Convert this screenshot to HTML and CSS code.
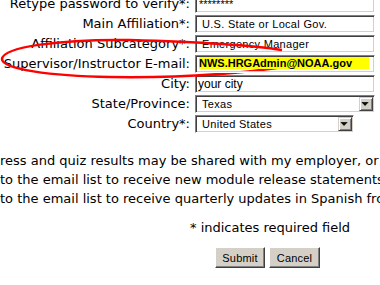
FILE: index.html
```html
<!DOCTYPE html>
<html lang="en">
<head>
    <meta charset="UTF-8">
    <title>Registration</title>
    <link rel="stylesheet" href="styles.css">
</head>
<body>
<div class="page">
    <form class="signup">
        <div class="fields">
            <label class="lbl">Retype password to verify*:</label>
            <input class="box pw" type="text" value="********">

            <label class="lbl">Main Affiliation*:</label>
            <input class="box" type="text" value="U.S. State or Local Gov.">

            <label class="lbl">Affiliation Subcategory*:</label>
            <input class="box" type="text" value="Emergency Manager">

            <label class="lbl">Supervisor/Instructor E-mail:</label>
            <input class="box mail" type="text" value="NWS.HRGAdmin@NOAA.gov">

            <label class="lbl">City:</label>
            <input class="box city" type="text" value="your city">

            <label class="lbl">State/Province:</label>
            <div class="combo">
                <select><option>Texas</option></select>
                <span class="drop"><svg width="14" height="14" viewBox="0 0 14 14"><rect x="3" y="5" width="7" height="1"/><rect x="4" y="6" width="5" height="1"/><rect x="5" y="7" width="3" height="1"/><rect x="6" y="8" width="1" height="1"/></svg></span>
            </div>

            <label class="lbl">Country*:</label>
            <div class="combo short">
                <select><option>United States</option></select>
                <span class="drop"><svg width="14" height="14" viewBox="0 0 14 14"><rect x="3" y="5" width="7" height="1"/><rect x="4" y="6" width="5" height="1"/><rect x="5" y="7" width="3" height="1"/><rect x="6" y="8" width="1" height="1"/></svg></span>
            </div>
        </div>

        <div class="opts">
            <p>ress and quiz results may be shared with my employer, or instructor</p>
            <p>to the email list to receive new module release statements</p>
            <p>to the email list to receive quarterly updates in Spanish from</p>
        </div>

        <p class="req">* indicates required field</p>

        <div class="actions">
            <button type="button" class="btn">Submit</button>
            <button type="button" class="btn">Cancel</button>
        </div>
    </form>

    <!-- red marker drawn round the e-mail row -->
    <svg class="marker" width="380" height="285" viewBox="0 0 380 285">
        <path d="M282 55 C250 50, 200 47, 130 45 C60 44, 3 52, 2 64 C2 74, 50 81, 110 82 C180 83, 240 79, 290 71"
              fill="none" stroke="#f00" stroke-width="2.5"/>
    </svg>
</div>
</body>
</html>
```

FILE: styles.css
```css
html, body {
    margin: 0;
    background: #fff;
}
body {
    width: 380px;
    height: 285px;
    overflow: hidden;
    color: #000;
    font-family: "DejaVu Sans", Verdana, sans-serif;
    font-size: 13px;
}
.page {
    position: relative;
    width: 380px;
    height: 285px;
}
.signup {
    margin: 0;
}

/* label / field table */
.fields {
    display: grid;
    grid-template-columns: 190px 180px;
    grid-auto-rows: 18px;
    column-gap: 5px;
    row-gap: 2px;
    margin-top: -5px;
}
.lbl {
    display: flex;
    justify-content: flex-end;
    align-items: center;
    white-space: nowrap;
    line-height: 18px;
}
.box {
    box-sizing: border-box;
    width: 180px;
    height: 18px;
    margin: 0;
    padding: 0 2px 0 6px;
    font-family: "Liberation Sans", Arial, sans-serif;
    font-size: 11px;
    letter-spacing: 0.3px;
    color: #000;
    background: #fff;
    border: 1px solid;
    border-color: #808080 #fff #fff #808080;
    box-shadow: inset 1px 1px #404040, inset -1px -1px #d4d0c8;
    outline: none;
}
.pw {
    padding-left: 3px;
    letter-spacing: 0;
}
.mail {
    position: relative;
    z-index: 2;
    font-weight: bold;
    letter-spacing: 0;
    padding: 1px 5px 3px 3px;
    background: #ff0 content-box;
}
.city {
    padding-left: 2px;
    font-size: 12px;
    letter-spacing: 0;
}

/* fake windows combo box */
.combo {
    box-sizing: border-box;
    display: flex;
    width: 180px;
    height: 18px;
    padding: 2px;
    background: #fff;
    border: 1px solid;
    border-color: #808080 #fff #fff #808080;
    box-shadow: inset 1px 1px #404040, inset -1px -1px #d4d0c8;
}
.combo.short {
    width: 159px;
}
.combo select {
    flex: 1;
    min-width: 0;
    margin: 0;
    padding: 0 0 0 4px;
    border: 0;
    background: transparent;
    font-family: "Liberation Sans", Arial, sans-serif;
    font-size: 11px;
    letter-spacing: 0.3px;
    color: #000;
    -webkit-appearance: none;
    appearance: none;
    outline: none;
}
.drop {
    box-sizing: border-box;
    display: flex;
    width: 14px;
    height: 14px;
    margin: -1px -1px 0 0;
    background: #d4d0c8;
    border: 1px solid;
    border-color: #d4d0c8 #404040 #404040 #d4d0c8;
    box-shadow: inset 1px 1px #fff, inset -1px -1px #808080;
}
.drop svg {
    display: block;
    margin: -1px 0 0 -1px;
}

/* checkbox lines, cut at the left by the crop */
.opts {
    margin-top: 18px;
}
.opts p {
    margin: 0;
    line-height: 19px;
    white-space: nowrap;
}
.req {
    margin: 10px 0 0 190px;
    line-height: 19px;
    white-space: nowrap;
}
.actions {
    display: flex;
    gap: 4px;
    margin: 10px 0 0 215px;
}
.btn {
    box-sizing: border-box;
    width: 50px;
    height: 21px;
    padding: 0;
    font-family: "Liberation Sans", Arial, sans-serif;
    font-size: 11px;
    letter-spacing: 0.2px;
    color: #000;
    background: #d4d0c8;
    border: 1px solid;
    border-color: #fff #404040 #404040 #fff;
    box-shadow: inset -1px -1px #808080, inset 1px 1px #d4d0c8;
}
.btn + .btn {
    width: 51px;
}

.marker {
    position: absolute;
    left: 0;
    top: 0;
    z-index: 1;
    pointer-events: none;
}
```
